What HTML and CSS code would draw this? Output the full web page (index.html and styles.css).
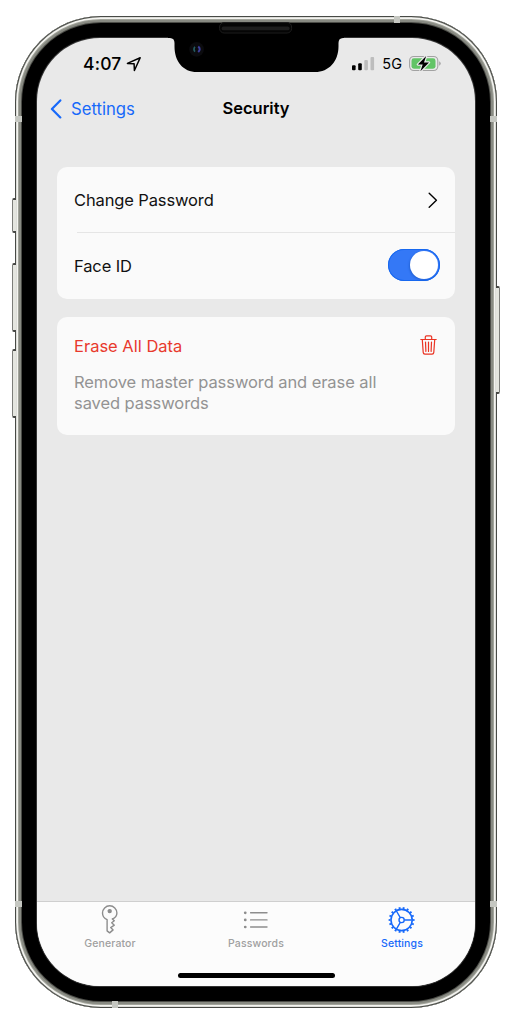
FILE: index.html
```html
<!DOCTYPE html>
<html lang="en">
<head>
<meta charset="utf-8">
<title>Security</title>
<link rel="stylesheet" href="styles.css">
</head>
<body>
<div class="device">
  <i class="key key-mute"></i><i class="key key-up"></i><i class="key key-down"></i><i class="key key-power"></i>
  <i class="band band-tl"></i><i class="band band-tr"></i><i class="band band-bl"></i><i class="band band-br"></i><i class="band band-top"></i><i class="band band-bottom"></i>
  <div class="screen">
    <header class="status">
      <div class="clock"><span>4:07</span>
        <svg width="16" height="16" viewBox="0 0 16 16" fill="none" stroke="#000" stroke-width="1.5" stroke-linejoin="round"><path d="M1.4 7.400 14.200 1.700 8.400 14.500 8.100 7.700Z"/></svg>
      </div>
      <div class="signal">
        <svg width="23" height="15" viewBox="0 0 23 15"><rect x="0" y="9.300" width="3.600" height="5" rx="1"/><rect x="6.200" y="7.200" width="3.600" height="7.100" rx="1"/><rect x="12.300" y="4" width="3.600" height="10.300" rx="1" fill="#bdbdbd"/><rect x="18.500" y="1" width="3.600" height="13.300" rx="1" fill="#bdbdbd"/></svg>
        <span>5G</span>
        <svg width="33" height="17" viewBox="0 0 33 17"><rect x=".6" y="1.500" width="28.200" height="14" rx="4.200" fill="none" stroke="#a2a2a2" stroke-width="1.100"/><rect x="2.500" y="3.300" width="24" height="10.400" rx="2.400" fill="#62c466"/><path d="M30.200 6.200v4.600q1.500-.8 1.500-2.300t-1.500-2.300Z" fill="#a2a2a2"/><path d="M17.200.9 8.900 9.500h4.800l-2.300 6.800 8.600-8.800h-5Z" stroke="#eaeaea" stroke-width="2.400" stroke-linejoin="round"/><path d="M17.200.9 8.900 9.500h4.800l-2.300 6.800 8.600-8.800h-5Z"/></svg>
      </div>
    </header>
    <nav class="navbar">
      <a class="back"><svg width="12" height="20" viewBox="0 0 12 20" fill="none" stroke="#1769fa" stroke-width="2.200" stroke-linecap="round" stroke-linejoin="round"><path d="M10.300 1.400 1.900 9.900l8.400 8.500"/></svg><span>Settings</span></a>
      <h1>Security</h1>
    </nav>
    <main>
      <section class="card">
        <div class="row first"><span class="label">Change Password</span><svg width="10" height="16" viewBox="0 0 10 16" fill="none" stroke="#000" stroke-width="1.400" stroke-linecap="round" stroke-linejoin="round"><path d="M1.200 1.200 8.400 8.200 1.200 15.200"/></svg></div>
        <hr>
        <div class="row second"><span class="label">Face ID</span><span class="toggle"><i></i></span></div>
      </section>
      <section class="card erase">
        <div class="erase-head"><span>Erase All Data</span><svg width="17" height="20" viewBox="0 0 17 20" fill="none" stroke="#ea3424" stroke-width="1.200" stroke-linecap="round" stroke-linejoin="round"><path d="M.8 4.500h15.400M5.300 4.300V2Q5.300.8 6.500.8h4q1.200 0 1.200 1.200v2.300M2.300 4.700l.9 12.700q.1 1.700 1.700 1.700h7.200q1.600 0 1.700-1.700l.9-12.700M5.500 7.100l.4 9.300M8.500 7.100v9.300M11.500 7.100l-.4 9.300"/></svg></div>
        <p>Remove master password and erase all<br>saved passwords</p>
      </section>
    </main>
    <footer>
      <div class="tabs">
        <div class="tab"><svg width="18" height="30" viewBox="0 0 18 30" fill="none" stroke="#8d8d8d" stroke-width="1.400" stroke-linejoin="round"><circle cx="8.700" cy="7.100" r="1.500" fill="#8d8d8d"/><path d="M6.100 15.700V26.900l2.500 2 3.500-3-2.400-2.300 3.600-2.400-2.600-2.500 2.600-2-2-1.700C14 13.900 15.900 11.700 15.900 9A7.200 7.200 0 1 0 1.500 9C1.500 12.100 3.300 14.500 6.100 15.700Z"/></svg><span>Generator</span></div>
        <div class="tab"><svg width="26" height="30" viewBox="0 0 26 30" fill="none" stroke="#8d8d8d" stroke-width="1.400" stroke-linecap="round"><path d="M7.600 8.800H24M7.600 15.900H24M7.600 23H24"/><path d="M2.200 8.800h.1M2.200 15.900h.1M2.200 23h.1" stroke-width="2.700"/></svg><span>Passwords</span></div>
        <div class="tab active"><svg width="28" height="30" viewBox="0 0 28 30" fill="none" stroke="#1769fa"><circle cx="13.600" cy="16" r="10.600" stroke-width="1.600"/><circle cx="13.600" cy="16" r="12" stroke-width="1.900" pathLength="180" stroke-dasharray="4.600 5.400" stroke-dashoffset="2.300"/><circle cx="13.600" cy="16" r="2.600" stroke-width="1.400"/><path d="M16.300 16h7.500M12.300 13.700 8.400 7M12.300 18.300 8.400 25.100" stroke-width="1.400"/></svg><span>Settings</span></div>
      </div>
      <div class="home"></div>
    </footer>
  </div>
  <svg class="notch" width="176" height="57" viewBox="0 0 176 57"><path d="M0 20H2Q6.500 20.200 6.500 25v3.400C6.500 43 15 54 29 54H147C161 54 170.500 43 170.500 28.400V25Q170.500 20.200 175 20h1V13H0Z"/><rect x="51.600" y="4.500" width="72" height="10.500" rx="4.500" fill="#050505" stroke="#1d1d1d" stroke-width="1"/><rect x="53.600" y="8.500" width="68" height="3.800" rx="1.900" fill="#1d1d1d"/><circle cx="28.600" cy="31.400" r="7.300" fill="#0b0b0e"/><path d="M26.900 28.700q-2 2.500 0 5" fill="none" stroke="#245c62" stroke-width="1.500"/><path d="M30.200 28.500q3 2.500 0 5.500" fill="none" stroke="#3d3f9c" stroke-width="2"/></svg>
</div>
</body>
</html>
```
FILE: styles.css
```css
* { box-sizing: border-box; }
body { margin: 0; height: 1024px; padding: 16px 0 0 15px; background: #fff; font-family: Inter, "Liberation Sans", sans-serif; overflow: hidden; }
i { display: block; }
.device {
  position: relative; width: 482px; height: 992px; padding: 22px; border-radius: 86px; background: #000;
  box-shadow: inset 0 0 0 1px #484a46, inset 0 0 0 1.500px #c5c6c1, inset 0 0 0 3px #f4f4f0, inset 0 0 0 4px #a3a59c, inset 0 0 0 6px #888a82, inset 0 0 0 7px #4b4c47;
}
.screen { height: 948px; border-radius: 63px; background: #e9e9e9; display: flex; flex-direction: column; overflow: hidden; box-shadow: 0 0 0 1px #333; }
.notch { position: absolute; left: 153px; top: 2px; clip-path: inset(4px 0 0 0); }
.key { position: absolute; width: 4px; left: -3.500px; border: 1px solid #7c7d79; border-width: 2px 0 2px 1px; border-top-color: #454643; border-bottom-color: #454643; border-radius: 2px 0 0 2px; background: #e4e5df; }
.key-mute { top: 182px; height: 35px; }
.key-up { top: 247px; height: 69px; }
.key-down { top: 333px; height: 69px; }
.key-power { left: 481px; width: 4px; top: 270px; height: 108px; border-width: 2px 1px 2px 0; border-radius: 0 2px 2px 0; }
.band { position: absolute; width: 7px; height: 6px; background: #c5c7c1; }
.band-tl, .band-bl { left: 0; }
.band-tr, .band-br { right: 0; }
.band-tl, .band-tr { top: 100px; }
.band-bl, .band-br { top: 885px; }
.band-top { left: 379px; top: 0; width: 6px; height: 7px; }
.band-bottom { left: 97px; bottom: 0; width: 6px; height: 7px; }

.status { height: 53px; display: flex; justify-content: space-between; padding: 15.500px 33px 0 46px; }
.clock, .signal { display: flex; align-items: center; height: 20px; }
.clock { font-size: 17.500px; font-weight: 550; letter-spacing: .2px; gap: 4px; }
.clock span { margin-top: -1px; }
.signal { font-size: 14.500px; gap: 7px; }
.navbar { height: 36px; position: relative; display: flex; align-items: center; justify-content: center; padding-bottom: 2px; }
.navbar h1 { margin: 0; font-size: 16.500px; font-weight: 580; }
.back { position: absolute; left: 13px; top: 7.500px; height: 20px; display: flex; align-items: center; gap: 9px; color: #1769fa; font-size: 16.700px; }

main { flex: 1; padding: 40px 20.500px 0 20px; display: flex; flex-direction: column; gap: 18px; }
.card { background: #fafafa; border-radius: 10px; height: 131.500px; font-size: 16.500px; color: #111; }
.row { display: flex; align-items: center; justify-content: space-between; height: 65px; padding: 0 14.500px 0 17px; }
.row.first { padding-right: 17px; }
.row.second { height: 64px; }
.row.second .label { padding-top: 2px; }
.label { letter-spacing: -.13px; }
hr { margin: 0 0 0 20px; border: 0; height: 1px; background: #e5e5e5; }
.toggle { width: 52px; height: 32px; border-radius: 16px; padding: 2px; background: #3478f6; box-shadow: inset 0 0 0 1px #1768ef; display: flex; justify-content: flex-end; }
.toggle i { width: 28px; height: 28px; border-radius: 50%; background: #fff; box-shadow: -1px 1px 2px #0a40a055; }
.erase { height: 118.500px; padding: 18.500px 18px 0 17px; }
.erase-head { display: flex; justify-content: space-between; align-items: center; height: 22px; color: #e8392d; }
.erase-head svg { margin-top: -3px; }
.erase p { margin: 15px 0 0; color: #939393; line-height: 21px; white-space: nowrap; letter-spacing: -.08px; }

footer { height: 85px; background: #fcfcfc; border-top: 1px solid #cfcfcf; }
.tabs { display: flex; height: 71px; padding-top: 2px; }
.tab { width: 146px; display: flex; flex-direction: column; align-items: center; font-size: 10.500px; font-weight: 500; letter-spacing: .12px; color: #a0a0a0; gap: 3px; }
.tab.active { color: #1769fa; }
.tab svg { display: block; }
.home { width: 157px; height: 5px; margin: 0 auto; border-radius: 3px; background: #000; }
```
